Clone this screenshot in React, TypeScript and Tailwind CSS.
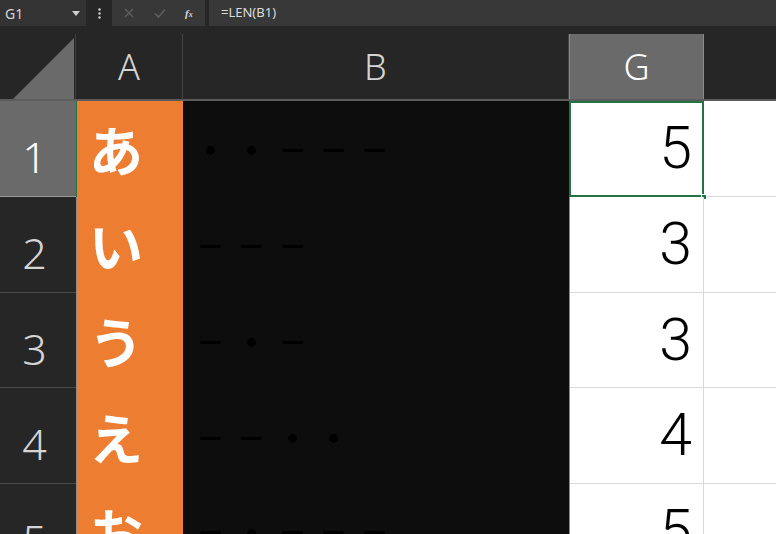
import React from 'react';

const rows = [
  { n: 1, kana: 'あ', b: '・・ーーー', g: 5 },
  { n: 2, kana: 'い', b: 'ーーー', g: 3 },
  { n: 3, kana: 'う', b: 'ー・ー', g: 3 },
  { n: 4, kana: 'え', b: 'ーー・・', g: 4 },
  { n: 5, kana: 'お', b: 'ー・ーーー', g: 5 },
];

const ui = { fontFamily: '"Noto Sans", "Liberation Sans", sans-serif' };
const jp = { fontFamily: '"Noto Sans CJK JP", sans-serif' };

function FormulaBar() {
  return (
    <div className="flex h-[26px] bg-[#262626] text-[#d6d6d6]" style={ui}>
      <div className="flex w-[86px] items-center justify-between bg-[#333333] pl-[5px] pr-[6px] text-[14px]">
        <span>G1</span>
        <svg width="8" height="5" viewBox="0 0 8 5">
          <path d="M0 0h8L4 5z" fill="#d0d0d0" />
        </svg>
      </div>
      <div className="flex w-[26px] items-center justify-center">
        <svg width="3" height="11" viewBox="0 0 3 11">
          <circle cx="1.5" cy="1.5" r="1.2" fill="#cfcfcf" />
          <circle cx="1.5" cy="5.5" r="1.2" fill="#cfcfcf" />
          <circle cx="1.5" cy="9.5" r="1.2" fill="#cfcfcf" />
        </svg>
      </div>
      <div className="flex w-[93px] items-center bg-[#383838]">
        <svg className="ml-[12px]" width="10" height="10" viewBox="0 0 10 10">
          <path d="M1 1l8 8M9 1l-8 8" stroke="#5e5e5e" strokeWidth="1.4" />
        </svg>
        <svg className="ml-[20px]" width="12" height="10" viewBox="0 0 12 10">
          <path d="M1 5.5l3.5 3.5L11 1.5" stroke="#5e5e5e" strokeWidth="1.6" fill="none" />
        </svg>
        <span className="ml-[19px] text-[11px] italic font-bold text-[#d8d8d8]" style={{ fontFamily: '"Liberation Serif", serif' }}>
          f<span className="text-[8px]">x</span>
        </span>
      </div>
      <div className="ml-[4px] flex flex-1 items-center bg-[#383838] pl-[12px] text-[13px] text-[#dcdcdc]">
        =LEN(B1)
      </div>
    </div>
  );
}

function HeaderRow() {
  return (
    <div className="flex h-[75px] border-b-2 border-[#5c5c5c] bg-[#262626] pt-[8px]" style={ui}>
      <div className="relative w-[76px] border-r border-[#3e3e3e]">
        <svg className="absolute left-[13px] top-[4px]" width="61" height="61" viewBox="0 0 61 61">
          <path d="M0 61L61 0v61z" fill="#6a6a6a" />
        </svg>
      </div>
      <div className="flex w-[107px] items-center justify-center border-r border-[#444] text-[36px] font-light text-[#d4d4d4]">
        A
      </div>
      <div className="flex w-[386px] items-center justify-center border-r border-[#444] text-[36px] font-light text-[#d4d4d4]">
        B
      </div>
      <div className="flex w-[135px] items-center justify-center border-x border-[#8a8a8a] bg-[#6a6a6a] text-[36px] font-light text-white">
        G
      </div>
      <div className="flex-1" />
    </div>
  );
}

// each character sits in a fixed 41px box; the long-vowel mark is narrowed like in the sheet
function Symbols({ text }: { text: string }) {
  return (
    <div className="flex pl-[7px] text-[41px] leading-none text-black" style={jp}>
      {Array.from(text).map((ch, i) => (
        <span key={i} className="inline-block w-[41px] text-center">
          <span className={ch === 'ー' ? 'inline-block scale-x-[0.62] scale-y-[0.8]' : 'inline-block'}>{ch}</span>
        </span>
      ))}
    </div>
  );
}

export default function App() {
  return (
    <div className="h-[534px] w-[776px] overflow-hidden bg-[#262626]">
      <FormulaBar />
      <HeaderRow />
      {rows.map((r) => {
        const sel = r.n === 1;
        return (
          <div key={r.n} className="flex h-[95.75px]">
            <div
              className={`flex w-[76px] items-center justify-center border-b pr-[7px] pt-[18px] text-[43px] font-light ${
                sel
                  ? 'border-[#9a9a9a] bg-[#6a6a6a] text-white'
                  : 'border-[#4a4a4a] bg-[#262626] text-[#d4d4d4]'
              }`}
              style={ui}
            >
              {r.n}
            </div>
            <div
              className={`flex w-[107px] items-center border-l pl-[12px] text-[54px] font-bold text-white bg-[#ed7d31] ${
                sel ? 'border-[#217346]' : 'border-[#8a8a8a]'
              }`}
              style={jp}
            >
              {r.kana}
            </div>
            <div className="flex w-[386px] items-center bg-[#0d0d0d]">
              <Symbols text={r.b} />
            </div>
            <div className="relative w-[135px] border-l border-[#8a8a8a] bg-white">
              <div
                className="flex h-full items-center justify-end border-b border-r border-[#d9d9d9] pr-[11px] text-[59px] font-light text-black"
                style={{ fontFamily: 'Roboto, "Liberation Sans", sans-serif' }}
              >
                {r.g}
              </div>
              {sel && (
                <>
                  <div className="absolute inset-0 -left-px border-2 border-[#217346]" />
                  <div className="absolute -bottom-[3px] -right-[3px] h-[6px] w-[6px] border border-white bg-[#217346]" />
                </>
              )}
            </div>
            <div className="flex-1 border-b border-[#d9d9d9] bg-white" />
          </div>
        );
      })}
    </div>
  );
}
